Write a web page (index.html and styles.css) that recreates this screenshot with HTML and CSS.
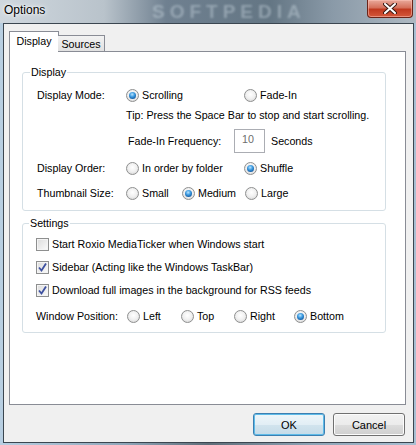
FILE: index.html
```html
<!DOCTYPE html>
<html lang="en">
<head>
<meta charset="UTF-8">
<title>Options</title>
<link rel="stylesheet" href="styles.css">
</head>
<body>
  <div class="titlebar">
    <span class="title">Options</span>
    <span class="watermark">SOFTPEDIA</span>
    <div class="close">
      <svg width="14" height="11" viewBox="0 0 14 11">
        <path d="M2 1 L12 10 M12 1 L2 10" stroke="#3a1a14" stroke-width="4" stroke-linecap="round"/>
        <path d="M2 1 L12 10 M12 1 L2 10" stroke="#fff" stroke-width="2" stroke-linecap="round"/>
      </svg>
    </div>
  </div>

  <div class="client">
    <div class="tabs">
      <div class="tab active">Display</div>
      <div class="tab">Sources</div>
    </div>

    <div class="panel">
      <fieldset class="group display-group">
        <legend>Display</legend>
        <div class="row r-mode">
          <span class="label">Display Mode:</span>
          <span class="opt w118"><span class="radio on"></span>Scrolling</span>
          <span class="opt"><span class="radio"></span>Fade-In</span>
        </div>
        <div class="row r-tip">
          <span class="label"></span>
          <span>Tip: Press the Space Bar to stop and start scrolling.</span>
        </div>
        <div class="row r-freq">
          <span class="label"></span>
          <span class="freq-label">Fade-In Frequency:</span>
          <span class="num">10</span>
          <span>Seconds</span>
        </div>
        <div class="row r-order">
          <span class="label">Display Order:</span>
          <span class="opt w118"><span class="radio"></span>In order by folder</span>
          <span class="opt"><span class="radio on"></span>Shuffle</span>
        </div>
        <div class="row r-thumb">
          <span class="label">Thumbnail Size:</span>
          <span class="opt w56"><span class="radio"></span>Small</span>
          <span class="opt w63"><span class="radio on"></span>Medium</span>
          <span class="opt"><span class="radio"></span>Large</span>
        </div>
      </fieldset>

      <fieldset class="group settings-group">
        <legend>Settings</legend>
        <div class="row r-cb1">
          <span class="check"></span>Start Roxio MediaTicker when Windows start
        </div>
        <div class="row r-cb">
          <span class="check"><svg width="11" height="11" viewBox="0 0 11 11"><path d="M2 5.5 L4.5 8.5 L9 1.5" fill="none" stroke="#3d50a0" stroke-width="1.8"/></svg></span>Sidebar (Acting like the Windows TaskBar)
        </div>
        <div class="row r-cb">
          <span class="check"><svg width="11" height="11" viewBox="0 0 11 11"><path d="M2 5.5 L4.5 8.5 L9 1.5" fill="none" stroke="#3d50a0" stroke-width="1.8"/></svg></span>Download full images in the background for RSS feeds
        </div>
        <div class="row r-pos">
          <span class="label pos-label">Window Position:</span>
          <span class="opt w54"><span class="radio"></span>Left</span>
          <span class="opt w53"><span class="radio"></span>Top</span>
          <span class="opt w60"><span class="radio"></span>Right</span>
          <span class="opt"><span class="radio on"></span>Bottom</span>
        </div>
      </fieldset>
    </div>

    <div class="buttons">
      <button class="btn default">OK</button>
      <button class="btn">Cancel</button>
    </div>
  </div>
</body>
</html>
```

FILE: styles.css
```css
html, body {
  margin: 0;
  padding: 0;
}

body {
  width: 416px;
  height: 445px;
  overflow: hidden;
  font-family: "Liberation Sans", Arial, sans-serif;
  font-size: 10.7px;
  color: #000;
  background: linear-gradient(to right, #b8cfe2 0%, #8fa6b9 30%, #5f6d78 50%, #8ea4b6 75%, #a9c0d3 100%);
}

/* title bar */
.titlebar {
  position: relative;
  height: 23px;
  background: linear-gradient(to right, #cfd7de 0%, #b9c3cb 25%, #6f8090 40%, #647684 65%, #8a9aa8 80%, #aeb9c2 100%);
}

.title {
  position: absolute;
  left: 4px;
  top: 3px;
  font-size: 12px;
  text-shadow: 0 0 6px #fff, 0 0 3px #fff;
}

.watermark {
  position: absolute;
  left: 152px;
  top: 1px;
  font-size: 19px;
  line-height: 21px;
  font-weight: bold;
  letter-spacing: 5px;
  color: rgba(200, 212, 222, 0.45);
  filter: blur(1px);
}

.close {
  position: absolute;
  left: 367px;
  top: 0;
  width: 44px;
  height: 17px;
  border: 1px solid #6b2418;
  border-top: none;
  border-radius: 0 0 4px 4px;
  background: linear-gradient(#e9a99b 0%, #d5705b 45%, #c0391f 55%, #d4583b 100%);
  box-shadow: inset 0 0 0 1px rgba(255, 200, 190, 0.5);
  display: flex;
  justify-content: center;
  align-items: center;
}

/* client area */
.client {
  margin: 0 2px 0 3px;
  height: 418px;
  border: 1px solid #3b4650;
  background: #f0f0f0;
}

.tabs {
  display: flex;
  align-items: flex-end;
  margin: 7px 0 -1px 5px;
  position: relative;
  z-index: 1;
}

.tab {
  box-sizing: border-box;
  border: 1px solid #898c95;
  display: flex;
  justify-content: center;
  align-items: center;
}

.tab.active {
  width: 50px;
  height: 21px;
  border-bottom: none;
  background: #fff;
  padding-bottom: 2px;
}

.tab:not(.active) {
  width: 47px;
  height: 17px;
  margin-left: -1px;
  border-left: none;
  background: linear-gradient(#f2f2f2, #e1e1e1);
  padding-top: 1px;
}

.panel {
  box-sizing: border-box;
  width: 397px;
  height: 354px;
  margin-left: 5px;
  border: 1px solid #898c95;
  background: #fff;
  padding-top: 13px;
}

/* group boxes */
.group {
  box-sizing: border-box;
  width: 364px;
  margin: 0 0 0 12px;
  padding: 0 0 0 14px;
  border: 1px solid #d5dfe5;
  border-radius: 3px;
  min-width: 0;
}

.group legend {
  padding: 0 1px;
  margin-left: -7px;
  height: 14px;
  line-height: 14px;
}

.display-group {
  height: 146px;
}

.settings-group {
  margin-top: 5px;
  height: 117px;
  padding-left: 13px;
}

.row {
  display: flex;
  align-items: center;
  height: 18px;
  white-space: nowrap;
}

.label {
  width: 89px;
  flex: none;
}

.r-mode { margin-top: 7px; }
.r-tip { margin-top: 2px; }
.r-freq { margin-top: 5px; height: 24px; }
.r-order { margin-top: 6px; }
.r-thumb { margin-top: 7px; }

.r-cb1 { margin-top: 5px; }
.r-cb { margin-top: 5px; }
.r-pos { margin-top: 8px; }

.pos-label {
  width: 91px;
}

.freq-label {
  margin-left: 2px;
  width: 106px;
}

.num {
  box-sizing: border-box;
  width: 31px;
  height: 24px;
  border: 1px solid #abadb3;
  border-top-color: #e3e9ef;
  border-left-color: #e2e3ea;
  border-right-color: #dbdfe6;
  border-bottom-color: #e3e9ef;
  outline: 1px solid #abadb3;
  outline-offset: -1px;
  color: #6d6d6d;
  text-align: center;
  line-height: 18px;
  margin-right: 6px;
  padding-right: 3px;
}

.opt {
  display: flex;
  align-items: center;
}

.w118 { width: 118px; }
.w56 { width: 56px; }
.w63 { width: 63px; }
.w54 { width: 54px; }
.w53 { width: 53px; }
.w60 { width: 60px; }

/* radio buttons */
.radio {
  box-sizing: border-box;
  width: 13px;
  height: 13px;
  border-radius: 50%;
  border: 1px solid #8e8f8f;
  background: radial-gradient(circle at 50% 40%, #ffffff 0%, #f0f0f0 50%, #cfcfcf 100%);
  margin-right: 3px;
  flex: none;
  position: relative;
}

.radio.on::after {
  content: "";
  position: absolute;
  left: 2px;
  top: 2px;
  width: 7px;
  height: 7px;
  border-radius: 50%;
  background: radial-gradient(circle at 45% 35%, #b9e4ff 0%, #3d9be0 40%, #145ea6 75%, #0b3a6e 100%);
}

/* check boxes */
.check {
  box-sizing: border-box;
  width: 13px;
  height: 13px;
  border: 1px solid #8e8f8f;
  background: linear-gradient(135deg, #dcdcdc, #fbfbfb);
  box-shadow: inset 0 0 0 1px #f4f4f4;
  margin-right: 3px;
  flex: none;
  display: flex;
  justify-content: center;
  align-items: center;
}

/* buttons */
.buttons {
  display: flex;
  justify-content: flex-end;
  gap: 8px;
  margin: 8px 8px 0 0;
}

.btn {
  box-sizing: border-box;
  width: 72px;
  height: 23px;
  font-family: "Liberation Sans", Arial, sans-serif;
  font-size: 11px;
  color: #000;
  border: 1px solid #707070;
  border-radius: 3px;
  background: linear-gradient(#f2f2f2 0%, #ebebeb 50%, #dddddd 50%, #cfcfcf 100%);
  box-shadow: inset 0 0 0 1px #fcfcfc;
  padding: 0;
}

.btn.default {
  border-color: #3c7fb1;
  box-shadow: inset 0 0 0 1px #5ebbe8;
  background: linear-gradient(#eef6fa 0%, #e2eef5 50%, #d2e4ee 50%, #c5dbe8 100%);
}
```
